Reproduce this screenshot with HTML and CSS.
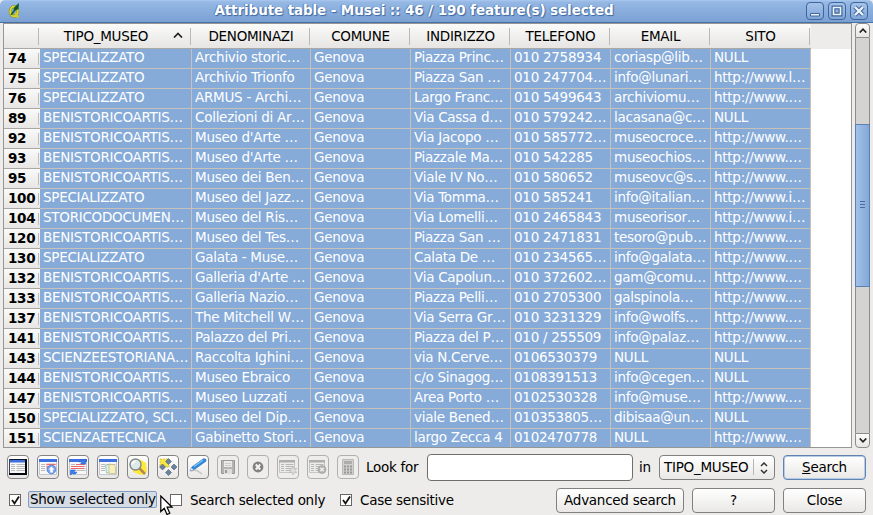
FILE: index.html
```
<!DOCTYPE html>
<html lang="it">
<head>
<meta charset="utf-8">
<title>Attribute table</title>
<link rel="stylesheet" href="styles.css">
</head>
<body>
<div class="window">
<header class="titlebar">
  <svg class="logo" width="14" height="18" viewBox="0 0 14 18"><ellipse cx="6" cy="9.500" rx="3.700" ry="4.800" fill="none" stroke="#6f7c14" stroke-width="3"/><ellipse cx="6" cy="9.500" rx="3.700" ry="4.800" fill="none" stroke="#d8d32e" stroke-width="2.200"/><path d="M7.500 11l2.500 4.500" stroke="#d0cc28" stroke-width="2.400"/><path d="M2.500 12.500l3-4 .5-3L11 1l-.5 6-3 1.500L4 13z" fill="#14581f"/></svg>
  <h1>Attribute table - Musei :: 46 / 190 feature(s) selected</h1>
  <div class="winbtns">
    <span><svg width="18" height="18"><path d="M4.500 11.500h9v2.500h-9z" fill="#eef4fb" stroke="#3f669b"/></svg></span>
    <span><svg width="18" height="18"><path d="M5.500 5.500h7v7h-7z" fill="none" stroke="#3f669b" stroke-width="4"/><path d="M5.500 5.500h7v7h-7z" fill="none" stroke="#eef4fb" stroke-width="1.600"/></svg></span>
    <span><svg width="18" height="18"><path d="M5 5l8 8M13 5l-8 8" stroke="#3f669b" stroke-width="4.400"/><path d="M5 5l8 8M13 5l-8 8" stroke="#eef4fb" stroke-width="2.400"/></svg></span>
  </div>
</header>
<main class="main">
<div class="table">
<div class="row head"><b></b><span>TIPO_MUSEO<svg class="sort" width="10" height="6"><path d="M1 5.500L5 1.500 9 5.500" fill="none" stroke="#222" stroke-width="1.700"/></svg></span><span>DENOMINAZI</span><span>COMUNE</span><span>INDIRIZZO</span><span>TELEFONO</span><span>EMAIL</span><span>SITO</span></div>
<div class="row"><b>74</b><i>SPECIALIZZATO</i><i>Archivio storic…</i><i>Genova</i><i>Piazza Princ…</i><i>010 2758934</i><i>coriasp@lib…</i><i>NULL</i></div>
<div class="row"><b>75</b><i>SPECIALIZZATO</i><i>Archivio Trionfo</i><i>Genova</i><i>Piazza San …</i><i>010 247704…</i><i>info@lunari…</i><i>http://www.l…</i></div>
<div class="row"><b>76</b><i>SPECIALIZZATO</i><i>ARMUS - Archi…</i><i>Genova</i><i>Largo Franc…</i><i>010 5499643</i><i>archiviomu…</i><i>http://www.…</i></div>
<div class="row"><b>89</b><i>BENISTORICOARTIS…</i><i>Collezioni di Ar…</i><i>Genova</i><i>Via Cassa d…</i><i>010 579242…</i><i>lacasana@c…</i><i>NULL</i></div>
<div class="row"><b>92</b><i>BENISTORICOARTIS…</i><i>Museo d'Arte …</i><i>Genova</i><i>Via Jacopo …</i><i>010 585772…</i><i>museocroce…</i><i>http://www.…</i></div>
<div class="row"><b>93</b><i>BENISTORICOARTIS…</i><i>Museo d'Arte …</i><i>Genova</i><i>Piazzale Ma…</i><i>010 542285</i><i>museochios…</i><i>http://www.…</i></div>
<div class="row"><b>95</b><i>BENISTORICOARTIS…</i><i>Museo dei Ben…</i><i>Genova</i><i>Viale IV No…</i><i>010 580652</i><i>museovc@s…</i><i>http://www.…</i></div>
<div class="row"><b>100</b><i>SPECIALIZZATO</i><i>Museo del Jazz…</i><i>Genova</i><i>Via Tomma…</i><i>010 585241</i><i>info@italian…</i><i>http://www.i…</i></div>
<div class="row"><b>104</b><i>STORICODOCUMEN…</i><i>Museo del Ris…</i><i>Genova</i><i>Via Lomelli…</i><i>010 2465843</i><i>museorisor…</i><i>http://www.i…</i></div>
<div class="row"><b>120</b><i>BENISTORICOARTIS…</i><i>Museo del Tes…</i><i>Genova</i><i>Piazza San …</i><i>010 2471831</i><i>tesoro@pub…</i><i>http://www.…</i></div>
<div class="row"><b>130</b><i>SPECIALIZZATO</i><i>Galata - Muse…</i><i>Genova</i><i>Calata De …</i><i>010 234565…</i><i>info@galata…</i><i>http://www.…</i></div>
<div class="row"><b>132</b><i>BENISTORICOARTIS…</i><i>Galleria d'Arte …</i><i>Genova</i><i>Via Capolun…</i><i>010 372602…</i><i>gam@comu…</i><i>http://www.…</i></div>
<div class="row"><b>133</b><i>BENISTORICOARTIS…</i><i>Galleria Nazio…</i><i>Genova</i><i>Piazza Pelli…</i><i>010 2705300</i><i>galspinola…</i><i>http://www.…</i></div>
<div class="row"><b>137</b><i>BENISTORICOARTIS…</i><i>The Mitchell W…</i><i>Genova</i><i>Via Serra Gr…</i><i>010 3231329</i><i>info@wolfs…</i><i>http://www.…</i></div>
<div class="row"><b>141</b><i>BENISTORICOARTIS…</i><i>Palazzo del Pri…</i><i>Genova</i><i>Piazza del P…</i><i>010 / 255509</i><i>info@palaz…</i><i>http://www.…</i></div>
<div class="row"><b>143</b><i>SCIENZEESTORIANA…</i><i>Raccolta Ighini…</i><i>Genova</i><i>via N.Cerve…</i><i>0106530379</i><i>NULL</i><i>NULL</i></div>
<div class="row"><b>144</b><i>BENISTORICOARTIS…</i><i>Museo Ebraico</i><i>Genova</i><i>c/o Sinagog…</i><i>0108391513</i><i>info@cegen…</i><i>NULL</i></div>
<div class="row"><b>147</b><i>BENISTORICOARTIS…</i><i>Museo Luzzati …</i><i>Genova</i><i>Area Porto …</i><i>0102530328</i><i>info@muse…</i><i>http://www.…</i></div>
<div class="row"><b>150</b><i>SPECIALIZZATO, SCI…</i><i>Museo del Dip…</i><i>Genova</i><i>viale Bened…</i><i>010353805…</i><i>dibisaa@un…</i><i>NULL</i></div>
<div class="row"><b>151</b><i>SCIENZAETECNICA</i><i>Gabinetto Stori…</i><i>Genova</i><i>largo Zecca 4</i><i>0102470778</i><i>NULL</i><i>http://www.…</i></div>
</div>
<div class="scroll">
  <div class="arrow up"><svg width="8" height="5"><path d="M.7 4.500L4 1.200 7.300 4.500" fill="none" stroke="#222" stroke-width="1.700"/></svg></div>
  <div class="track"><div class="thumb"></div></div>
  <div class="arrow down"><svg width="8" height="5"><path d="M.7.5L4 3.800 7.300.5" fill="none" stroke="#222" stroke-width="1.700"/></svg></div>
</div>
</main>
<svg class="defs" width="0" height="0"><defs>
<g id="tbl"><path d="M.5 1.500h17v15H.5z" fill="#f8f8f8" stroke="#c4c8cf"/><path d="M0 1h18v3H0z" fill="#3d6fe0"/><path d="M2 6.500h4M2 8.500h4M2 10.500h4M2 12.500h4M7.500 6.500h9M7.500 8.500h9M7.500 10.500h9M7.500 12.500h9" stroke="#b9bbbd"/></g>
<g id="gtbl"><path d="M.5 2.500h15v12H.5z" fill="#ececeb" stroke="#c6c6c5"/><path d="M0 2h16v2.500H0z" fill="#adadac"/><path d="M2 6.500h3M2 8.500h3M2 10.500h3M2 12.500h3M6.500 6.500h8M6.500 8.500h8M6.500 10.500h8M6.500 12.500h8" stroke="#b7b7b6"/></g>
</defs></svg>
<footer class="bottom">
<div class="bar tools">
  <button class="tool"><svg width="18" height="18"><use href="#tbl"/><path d="M.5 1.500h16" stroke="#10182c"/><path d="M.5 1v15" stroke="#39445c"/><path d="M17 1v15.500M0 16h18" stroke="#05080f" stroke-width="2"/><path d="M1 2h15v2.500H1z" fill="#3d6fe0"/></svg></button>
  <button class="tool"><svg width="18" height="18"><use href="#tbl"/><path d="M7.500 6.500h9M7.500 9h3" stroke="#ee6a6a" stroke-width="1.300"/><circle cx="12.500" cy="11.500" r="4.300" fill="#7ca4ef" stroke="#5a86de"/><path d="M12.500 8.500l3 3h-1.700v3h-2.600v-3H9.500z" fill="#fff"/></svg></button>
  <button class="tool"><svg width="18" height="18"><use href="#tbl"/><path d="M7 6.500h9M2 8.500h13M2 10.500h13" stroke="#ee6a6a" stroke-width="1.200"/><path d="M10 4c1-2.500 3.500-2.500 4.500-1.500L16.500 1v5h-5L13 4.500C12 3.500 11 4 10 4zM8 14c-1 2.500-3.500 2.500-4.500 1.500L1.500 17v-5h5L5 13.500c1 1 2 .5 3 .5z" fill="#3a7bed" stroke="#2c62c4" stroke-width=".6"/></svg></button>
  <button class="tool"><svg width="18" height="18"><use href="#tbl"/><path d="M6.500 7l5.500-1 1 8-5.500 1z" fill="#d9efe9" stroke="#86b5ae" stroke-width=".7"/><path d="M10 6.500h4.500l2 2v7H10z" fill="#f7f0bd" stroke="#c3b878" stroke-width=".7"/></svg></button>
  <button class="tool"><svg width="20" height="20"><path d="M4 3h9l5 3 1 9-6 3-8-3z" fill="#fce93b"/><path d="M11.500 11.500l5.500 5.500" stroke="#b98a4c" stroke-width="2.600"/><circle cx="7.500" cy="7.500" r="5.500" fill="#dceaf0" fill-opacity=".95" stroke="#858888" stroke-width="1.400"/><path d="M4.500 7.500c0-2 1.500-3 3-3" fill="none" stroke="#fff" stroke-width="1.500"/></svg></button>
  <button class="tool"><svg width="20" height="20"><path d="M2 2h9v8H2z" fill="#f9e645" stroke="#c9b92c" stroke-width=".7" stroke-dasharray="2 1"/><g fill="#6b819c" stroke="#4d6079" stroke-width=".6"><path d="M10.500 1.500l3 3-3 3-3-3zM4.500 7l3 3-3 3-3-3zM16 7l3 3-3 3-3-3zM10.500 12.500l3 3-3 3-3-3z"/></g></svg></button>
  <button class="tool"><svg width="20" height="20"><path d="M3 14c5-2 7 0 11 3" fill="none" stroke="#c6c6c6" stroke-width="1.500"/><path d="M2 14l2-4L15 2c2-1 4 .5 2.500 2.500L7 12z" fill="#2d8be0" stroke="#1c62ac" stroke-width=".6"/><path d="M6 9.500l9-6.500" stroke="#80c5fa" stroke-width="1.200"/><path d="M2 14l1.500-3 2 1.500z" fill="#eee"/></svg></button>
  <button class="tool off"><svg width="18" height="18"><path d="M2.500 2.500h13v13H2.500z" fill="#b4b4b3" stroke="#999"/><path d="M5 3h8v6H5z" fill="#eaeaea"/><path d="M5 11h8v5H5z" fill="#ddd"/><path d="M6 12h2v3H6z" fill="#999"/><path d="M6 5.500h6M6 7.500h6" stroke="#ccc"/></svg></button>
  <button class="tool off"><svg width="18" height="18"><circle cx="9" cy="9" r="5.400" fill="#828282"/><path d="M6.800 6.500l4.400 5M11.200 6.500l-4.400 5" stroke="#f3f3f3" stroke-width="2"/></svg></button>
  <button class="tool off"><svg width="18" height="18"><use href="#gtbl"/><path d="M14 8.500l1.200 2.300 2.500-.5-1.400 2.200 1.400 2.200-2.500-.4L14 17l-1.200-2.700-2.500.4 1.400-2.200-1.400-2.200 2.500.5z" fill="#dededd" stroke="#b8b8b8" stroke-width=".7"/></svg></button>
  <button class="tool off"><svg width="18" height="18"><use href="#gtbl"/><circle cx="13" cy="11.500" r="4" fill="#b0b0b0" stroke="#a5a5a5" stroke-width=".7"/><path d="M11.300 9.800l3.400 3.400m0-3.400l-3.400 3.400" stroke="#eee" stroke-width="1.500"/></svg></button>
  <button class="tool off"><svg width="18" height="18"><path d="M3.500 1.500h11v15h-11z" fill="#d0d0cf" stroke="#b9b9b8"/><path d="M5 3h8v3H5z" fill="#adadac"/><path d="M5 8.500h8M5 11.500h8M5 14.500h8" stroke="#969695" stroke-width="1.800" stroke-dasharray="2 1"/></svg></button>
  <label class="look">Look for</label>
  <input class="query" type="text">
  <span class="in">in</span>
  <button class="btn combo"><span>TIPO_MUSEO</span><svg width="8" height="12"><path d="M1 4l3-3 3 3M1 8l3 3 3-3" fill="none" stroke="#333" stroke-width="1.500"/></svg></button>
  <button class="btn primary"><span><u>S</u>earch</span></button>
</div>
<div class="bar opts">
  <span class="box"><svg width="11" height="11"><path d="M2 5l2.500 3.500L9 1.500" fill="none" stroke="#111" stroke-width="1.800"/></svg></span><span class="lab focus">Show selected only</span>
  <span class="box second"></span><span class="lab">Search selected only</span>
  <span class="box third"><svg width="11" height="11"><path d="M2 5l2.500 3.500L9 1.500" fill="none" stroke="#111" stroke-width="1.800"/></svg></span><span class="lab">Case sensitive</span>
  <div class="actions"><button class="btn adv">Advanced search</button><button class="btn">?</button><button class="btn">Close</button></div>
</div>
</footer>
<svg class="cursor" width="14" height="21" viewBox="0 0 14 21"><path d="M.8 1v15.500l3.500-3.300 2.700 6.300 2.800-1.200-2.700-6.100h5z" fill="#fff" stroke="#000" stroke-width="1.200"/></svg>
</div>
</body>
</html>
```
FILE: styles.css
```
* { box-sizing: border-box; }
body { margin: 0; background: #edecea; font: 13.500px "DejaVu Sans", sans-serif; letter-spacing: -0.270px; color: #000; overflow: hidden; }
.window { position: relative; width: 873px; height: 515px; display: flex; flex-direction: column; }
.titlebar { height: 23px; flex: none; display: flex; align-items: center; padding: 0 5px 0 8px; background: linear-gradient(#a9c8f0 0, #95b8e4 2px, #7ba0d2 22px, #4571a8 22px); border-radius: 5px 5px 0 0; }
.logo { display: block; margin-bottom: 2px; }
.titlebar h1 { flex: 1; margin: 0 0 2px; font-size: 13.500px; letter-spacing: -0.100px; line-height: 21px; text-align: center; color: #fff; text-shadow: 1px 1px 1px #3c669f, -1px 0 1px #5b83b8; white-space: nowrap; }
.winbtns { display: flex; gap: 4px; margin-bottom: 1px; }
.winbtns span { width: 18px; height: 18px; border: 1px solid #3f669b; border-radius: 4px; background: linear-gradient(#a5c3ea, #7fa5d8); }
.winbtns svg { display: block; margin: -1px; }
.main { height: 425px; flex: none; display: flex; padding: 0 3px; }
.table { width: 849px; border: 1px solid #969694; background: #fff; overflow: hidden; }
.row { display: grid; grid-template-columns: 36px 152px 119px repeat(5, 100px); height: 20px; line-height: 16px; white-space: nowrap; }
.row i { font-style: normal; color: #fff; background: #86abd9; border-right: 1px solid #c6c1b9; border-bottom: 1px solid #c6c1b9; padding: 0 0 0 3px; overflow: hidden; }
.row b { padding: 1px 0 0 4px; background: linear-gradient(#fafafa, #e7e6e4); border-bottom: 1px solid #aaa9a6; position: relative; }
.row b::after { content: ""; position: absolute; right: 1px; top: 4px; bottom: 3px; width: 1px; background: #bdbcb9; }
.head { height: 25px; background: #edecea; line-height: 24px; }
.head span, .head b { position: relative; text-align: center; background: linear-gradient(#fbfbfa, #e6e5e3); border-bottom: 1px solid #aaa9a6; }
.head span { padding-right: 1px; }
.head span:nth-child(2) { padding-right: 20px; }
.head span::after, .head b::after { content: ""; position: absolute; right: 1px; top: 4px; bottom: 3px; width: 1px; background: #bab9b6; }
.sort { position: absolute; right: 9px; top: 8px; }
.scroll { margin-left: 3px; width: 15px; display: flex; flex-direction: column; }
.arrow { height: 15px; flex: none; display: flex; align-items: center; justify-content: center; border: 1px solid #8d8c8a; background: linear-gradient(#fdfdfd, #e6e5e3); }
.up { border-radius: 4px 4px 0 0; }
.down { border-radius: 0 0 4px 4px; }
.track { flex: 1; background: #d5d3d1; border: solid #8d8c8a; border-width: 0 1px; padding-top: 86px; }
.thumb { height: 163px; margin: 0 -1px; border: 1px solid #5a80b4; background: linear-gradient(#456d9f, #456d9f) 4px 76px / 5px 1px no-repeat, linear-gradient(#456d9f, #456d9f) 4px 79px / 5px 1px no-repeat, linear-gradient(#456d9f, #456d9f) 4px 82px / 5px 1px no-repeat, linear-gradient(90deg, #a2c1e8, #84a8d7); }
.defs { position: absolute; }
.bottom { padding: 6px 7px 0; }
.bar { display: flex; align-items: center; }
.tools { height: 27px; }
button, input { font: inherit; letter-spacing: inherit; color: inherit; margin: 0; padding: 0; }
.tool { width: 22px; height: 24px; margin: 0 8px 1px 0; flex: none; display: flex; align-items: center; justify-content: center; border: 1px solid #858483; border-radius: 4px; background: linear-gradient(#fff, #e8e7e5); }
.tool svg { flex: none; }
.tool.off { border-color: #b1b0ae; background: #eeedeb; }
.look { width: 60px; margin: 0 0 2px -1px; white-space: nowrap; flex: none; }
.query { width: 206px; height: 27px; border: 1px solid #6f6e6c; border-radius: 4px; background: #fff; margin-left: 1px; flex: none; }
.in { width: 20px; margin: 0 0 2px 6px; flex: none; }
.btn { width: 83px; height: 25px; flex: none; border: 1px solid #82817f; border-radius: 4px; background: linear-gradient(#fff, #e9e8e6); white-space: nowrap; text-align: center; padding-bottom: 2px; }
.combo { width: 116px; display: flex; align-items: center; justify-content: space-between; padding: 0 6px 2px 4px; }
.combo svg { margin-top: 2px; }
.combo span { padding-right: 5px; border-right: 1px solid #b8b7b5; }
.primary { margin-left: 8px; border-color: #6183b2; box-shadow: inset 0 0 0 1px #b5cbe7; }
.opts { height: 25px; margin-top: 7px; }
.box { width: 12px; height: 12px; margin: 0 0 2px 2px; flex: none; border: 1px solid #686765; background: #fff; }
.box svg { display: block; }
.lab { margin: 0 0 2px 8px; white-space: nowrap; line-height: 16px; }
.focus { width: 129px; height: 17px; margin-left: 7px; padding-left: 1px; line-height: 15px; background: #d6dce5; border: 1px solid #819cbf; border-radius: 2px; }
.box.second { margin-left: 13px; }
.box.third { margin-left: 15px; }
.actions { margin-left: auto; display: flex; gap: 8px; }
.adv { width: 128px; }
.cursor { position: absolute; left: 160px; top: 495px; }
```
